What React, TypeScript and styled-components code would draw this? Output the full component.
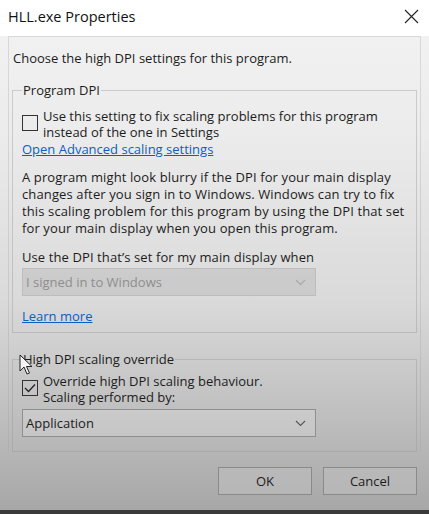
import styled, { createGlobalStyle } from "styled-components"

const GlobalStyle = createGlobalStyle`
  html, body {
    margin: 0;
    padding: 0;
    background: #a8a8a8;
  }
  body {
    font-family: "Open Sans", "Noto Sans", sans-serif;
  }
`

const Window = styled.div`
  position: relative;
  width: 429px;
  height: 514px;
  display: flex;
  flex-direction: column;
  overflow: hidden;
  color: #1c1c1c;
  font-size: 13px;
`

const TitleBar = styled.div`
  height: 36px;
  flex-shrink: 0;
  box-sizing: border-box;
  background: #ffffff;
  display: flex;
  align-items: center;
  justify-content: space-between;
  padding: 0 10px 4px 8px;
`

const Title = styled.span`
  font-size: 14.5px;
  color: #111;
`

const Body = styled.div`
  flex: 1;
  background: linear-gradient(#f1f1f1 0%, #ececec 20%, #dadada 55%, #bebebe 80%, #a6a6a6 100%);
  display: flex;
  flex-direction: column;
  padding: 0 8px;
  position: relative;
`

const Frame = styled.div`
  border: 1px solid rgba(160, 160, 160, 0.3);
  border-bottom: none;
  padding: 12px 3px 0 3px;
  display: flex;
  flex-direction: column;
`

const Heading = styled.div`
  margin: 0 0 15px 1px;
`

const Group = styled.fieldset<{ $height: number }>`
  margin: 0;
  height: ${p => p.$height}px;
  box-sizing: border-box;
  border: 1px solid rgba(150, 150, 150, 0.4);
  padding: 0 6px 0 9px;
  display: flex;
  flex-direction: column;
  & + & {
    margin-top: 18px;
  }
`

const Legend = styled.legend`
  padding: 0 1px;
  line-height: 16px;
`

const CheckRow = styled.div<{ $top: number }>`
  display: flex;
  align-items: flex-start;
  gap: 5px;
  margin-top: ${p => p.$top}px;
`

const Box = styled.span`
  width: 14px;
  height: 14px;
  border: 1px solid #333;
  flex-shrink: 0;
  margin-top: 7px;
  display: flex;
  align-items: center;
  justify-content: center;
`

const CheckText = styled.div`
  line-height: 16px;
`

const Link = styled.a<{ $top: number }>`
  color: #0a5fc2;
  text-decoration: underline;
  line-height: 17px;
  align-self: flex-start;
  margin-top: ${p => p.$top}px;
`

const Paragraph = styled.p`
  margin: 11px 0 0 0;
  line-height: 17px;
  letter-spacing: 0.12px;
`

const Label = styled.div`
  margin-top: 12px;
  line-height: 17px;
  letter-spacing: 0.1px;
`

const Select = styled.div<{ $disabled?: boolean; $top: number }>`
  width: 294px;
  height: 28px;
  box-sizing: border-box;
  margin-top: ${p => p.$top}px;
  border: 1px solid ${p => (p.$disabled ? "#bdbdbd" : "#8f8f8f")};
  background: ${p => (p.$disabled ? "rgba(190,190,190,0.55)" : "rgba(235,235,235,0.25)")};
  color: ${p => (p.$disabled ? "#8e8e8e" : "#1c1c1c")};
  display: flex;
  align-items: center;
  justify-content: space-between;
  padding: 0 9px 0 3px;
`

const Buttons = styled.div`
  display: flex;
  justify-content: flex-end;
  gap: 11px;
  margin-top: 15px;
  padding-right: 4px;
`

const Button = styled.div`
  width: 94px;
  height: 28px;
  box-sizing: border-box;
  border: 1px solid #8a8a8a;
  background: rgba(190, 190, 190, 0.6);
  display: flex;
  align-items: center;
  justify-content: center;
`

const BottomStrip = styled.div`
  position: absolute;
  left: 0;
  right: 0;
  bottom: 0;
  height: 4px;
  background: #3a3a3a;
`

const Cursor = styled.svg`
  position: absolute;
  left: 19px;
  top: 354px;
`

function Chevron({ color }: { color: string }) {
  return (
    <svg width="11" height="7" viewBox="0 0 11 7">
      <path d="M1 1 L5.5 5.5 L10 1" fill="none" stroke={color} strokeWidth="1.1" />
    </svg>
  )
}

export default function App() {
  return (
    <Window>
      <GlobalStyle />
      <TitleBar>
        <Title>HLL.exe Properties</Title>
        <svg width="15" height="15" viewBox="0 0 15 15">
          <path d="M1 1 L14 14 M14 1 L1 14" stroke="#222" strokeWidth="1.1" />
        </svg>
      </TitleBar>
      <Body>
        <Frame>
          <Heading>Choose the high DPI settings for this program.</Heading>
          <Group $height={251}>
            <Legend>Program DPI</Legend>
            <CheckRow $top={10}>
              <Box />
              <CheckText>
                Use this setting to fix scaling problems for this program
                <br />
                instead of the one in Settings
              </CheckText>
            </CheckRow>
            <Link $top={1}>Open Advanced scaling settings</Link>
            <Paragraph>
              A program might look blurry if the DPI for your main display
              changes after you sign in to Windows. Windows can try to fix
              this scaling problem for this program by using the DPI that set
              for your main display when you open this program.
            </Paragraph>
            <Label>Use the DPI that’s set for my main display when</Label>
            <Select $disabled $top={2}>
              <span>I signed in to Windows</span>
              <Chevron color="#a8a8a8" />
            </Select>
            <Link $top={12}>Learn more</Link>
          </Group>
          <Group $height={101}>
            <Legend>High DPI scaling override</Legend>
            <CheckRow $top={6}>
              <Box>
                <svg width="12" height="10" viewBox="0 0 12 10">
                  <path d="M1 5 L4.5 8.5 L11 1.5" fill="none" stroke="#222" strokeWidth="1.3" />
                </svg>
              </Box>
              <CheckText>
                Override high DPI scaling behaviour.
                <br />
                Scaling performed by:
              </CheckText>
            </CheckRow>
            <Select $top={4}>
              <span>Application</span>
              <Chevron color="#555" />
            </Select>
          </Group>
        </Frame>
        <Buttons>
          <Button>OK</Button>
          <Button>Cancel</Button>
        </Buttons>
        <BottomStrip />
      </Body>
      <Cursor width="14" height="22" viewBox="0 0 14 22">
        <path d="M1 1 L1 17 L5 13 L8 20 L10.5 19 L7.5 12.5 L13 12.5 Z" fill="#f4f4f4" stroke="#222" strokeWidth="1" strokeLinejoin="round" />
      </Cursor>
    </Window>
  )
}
